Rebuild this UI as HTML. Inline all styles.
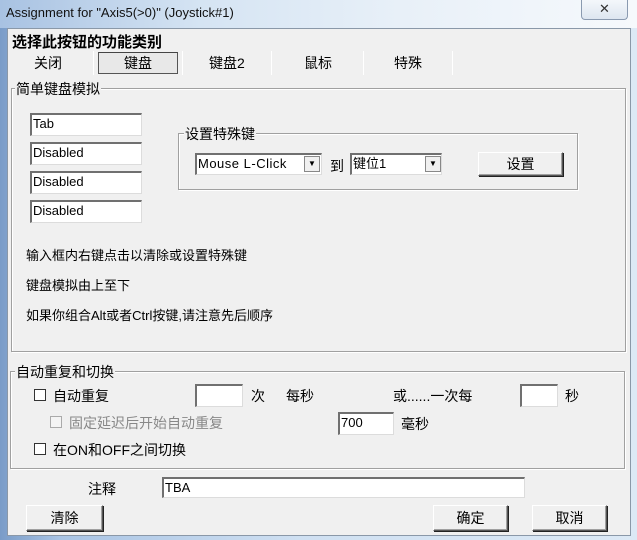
<!DOCTYPE html>
<html><head><meta charset="utf-8"><style>
*{margin:0;padding:0;box-sizing:border-box}
body{width:637px;height:540px;position:relative;overflow:hidden;font-family:"Liberation Sans","Noto Sans CJK SC",sans-serif;font-size:13px;color:#000;background:linear-gradient(90deg,#7a9cc8 0,#a9c4e4 60px,#cfe0f2 300px,#dce9f5 637px)}
.a{position:absolute;white-space:nowrap}
.title{left:0;top:0;width:637px;height:28px;background:linear-gradient(90deg,#a8c2e2 0,#d5e4f3 200px,#e8f0f8 400px,#f6f9fc 637px)}
.client{left:7px;top:28px;width:624px;height:508px;background:#f0f0f0;border:1px solid #8a98a8}
.grp{border:1px solid #a0a0a0;box-shadow:inset 1px 1px 0 #fff,1px 1px 0 #fff}
.gl{background:#f0f0f0;padding:0 1px;font-size:14px}
.ed{background:#fff;border-top:2px solid #707070;border-left:2px solid #707070;border-right:1px solid #dcdcdc;border-bottom:1px solid #dcdcdc;padding-left:1px;font-size:13px;line-height:18px}
.btn{background:#f0f0f0;border:1px solid #555;border-top-color:#fff;border-left-color:#fff;box-shadow:1px 1px 0 #222,inset -1px -1px 0 #a0a0a0;text-align:center;font-size:14px}
.cb{width:12px;height:12px;border:1px solid #333;background:#fff}
.sep{width:1px;height:24px;background:#a0a0a0;border-right:1px solid #fff}
.dd{width:16px;height:16px;background:#f0f0f0;border:1px solid #888;font-size:8px;text-align:center;line-height:14px}
</style></head><body>
<div class="a title"></div>
<div class="a" style="left:6px;top:5px;font-size:13px;color:#111">Assignment for "Axis5(&gt;0)" (Joystick#1)</div>
<div class="a" style="left:581px;top:0;width:47px;height:20px;border:1px solid #8a9ab0;border-top:none;border-radius:0 0 4px 4px;background:linear-gradient(#f4f7fb,#dde6f0);text-align:center;font-size:13px;color:#333;line-height:18px">✕</div>
<div class="a client"></div>

<div class="a" style="left:12px;top:31px;font-size:15px;font-weight:bold">选择此按钮的功能类别</div>
<div class="a" style="left:34px;top:53px;font-size:14px">关闭</div>
<div class="a sep" style="left:93px;top:51px"></div>
<div class="a" style="left:98px;top:52px;width:80px;height:22px;border:1px solid #555;border-top-color:#444;background:#e8e8e8;text-align:center;font-size:14px;line-height:20px">键盘</div>
<div class="a sep" style="left:182px;top:51px"></div>
<div class="a" style="left:209px;top:53px;font-size:14px">键盘2</div>
<div class="a sep" style="left:271px;top:51px"></div>
<div class="a" style="left:304px;top:53px;font-size:14px">鼠标</div>
<div class="a sep" style="left:363px;top:51px"></div>
<div class="a" style="left:394px;top:53px;font-size:14px">特殊</div>
<div class="a sep" style="left:452px;top:51px"></div>

<div class="a grp" style="left:11px;top:88px;width:615px;height:264px"></div>
<div class="a gl" style="left:15px;top:79px">简单键盘模拟</div>
<div class="a ed" style="left:30px;top:113px;width:112px;height:23px">Tab</div>
<div class="a ed" style="left:30px;top:142px;width:112px;height:23px">Disabled</div>
<div class="a ed" style="left:30px;top:171px;width:112px;height:23px">Disabled</div>
<div class="a ed" style="left:30px;top:200px;width:112px;height:23px">Disabled</div>

<div class="a grp" style="left:178px;top:133px;width:400px;height:57px"></div>
<div class="a gl" style="left:184px;top:124px">设置特殊键</div>
<div class="a ed" style="left:195px;top:153px;width:127px;height:22px;letter-spacing:.5px">Mouse L-Click</div>
<div class="a dd" style="left:304px;top:156px">▼</div>
<div class="a" style="left:330px;top:156px;font-size:14px">到</div>
<div class="a ed" style="left:350px;top:153px;width:92px;height:22px">键位1</div>
<div class="a dd" style="left:425px;top:156px">▼</div>
<div class="a btn" style="left:478px;top:152px;width:85px;height:24px;line-height:22px">设置</div>

<div class="a" style="left:26px;top:245px">输入框内右键点击以清除或设置特殊键</div>
<div class="a" style="left:26px;top:275px">键盘模拟由上至下</div>
<div class="a" style="left:26px;top:305px">如果你组合Alt或者Ctrl按键,请注意先后顺序</div>

<div class="a grp" style="left:10px;top:371px;width:615px;height:98px"></div>
<div class="a gl" style="left:15px;top:362px">自动重复和切换</div>
<div class="a cb" style="left:34px;top:389px"></div>
<div class="a" style="left:53px;top:386px;font-size:14px">自动重复</div>
<div class="a ed" style="left:195px;top:384px;width:48px;height:23px"></div>
<div class="a" style="left:251px;top:386px;font-size:14px">次</div>
<div class="a" style="left:286px;top:386px;font-size:14px">每秒</div>
<div class="a" style="left:393px;top:386px;font-size:14px">或......一次每</div>
<div class="a ed" style="left:520px;top:384px;width:38px;height:23px"></div>
<div class="a" style="left:565px;top:386px;font-size:14px">秒</div>
<div class="a cb" style="left:50px;top:416px;border-color:#aaa;background:#f4f4f4"></div>
<div class="a" style="left:69px;top:413px;font-size:14px;color:#888">固定延迟后开始自动重复</div>
<div class="a ed" style="left:338px;top:412px;width:56px;height:23px">700</div>
<div class="a" style="left:401px;top:414px;font-size:14px">毫秒</div>
<div class="a cb" style="left:34px;top:443px"></div>
<div class="a" style="left:53px;top:440px;font-size:14px">在ON和OFF之间切换</div>

<div class="a" style="left:88px;top:479px;font-size:14px">注释</div>
<div class="a ed" style="left:162px;top:477px;width:363px;height:21px">TBA</div>
<div class="a btn" style="left:26px;top:505px;width:77px;height:26px;line-height:24px">清除</div>
<div class="a btn" style="left:433px;top:505px;width:75px;height:26px;line-height:24px">确定</div>
<div class="a btn" style="left:532px;top:505px;width:75px;height:26px;line-height:24px">取消</div>
</body></html>
